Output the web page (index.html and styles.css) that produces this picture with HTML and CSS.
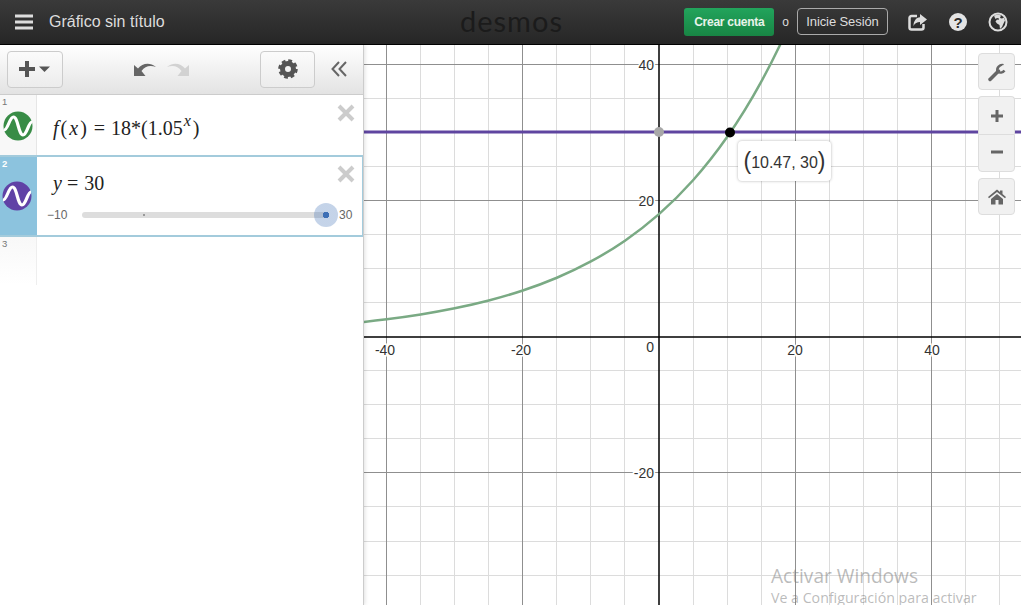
FILE: index.html
```html
<!DOCTYPE html>
<html lang="es">
<head>
<meta charset="utf-8">
<title>Gráfico sin título</title>
<link rel="stylesheet" href="styles.css">
</head>
<body>
<div class="app">
  <header class="topbar">
    <div class="top-left">
      <svg class="hamburger" width="18" height="16" viewBox="0 0 18 16"><path d="M0 2h18M0 8h18M0 14h18"/></svg>
      <span class="title">Gráfico sin título</span>
    </div>
    <div class="logo">desmos</div>
    <div class="top-right">
      <span class="btn-create">Crear cuenta</span>
      <span class="or">o</span>
      <span class="btn-login">Inicie Sesión</span>
      <svg class="top-icon" width="20" height="18" viewBox="0 0 20 18">
        <path class="share-box" d="M9 3H3.500A2 2 0 0 0 1.500 5v9.500A2 2 0 0 0 3.500 16.500h10a2 2 0 0 0 2-2V11"/>
        <path class="share-arrow" d="M12 1l7 5.500-7 5.500V9C9 9 7 10 5.500 13 5.500 8 8 4.500 12 4.200z"/>
      </svg>
      <svg class="top-icon" width="20" height="20" viewBox="0 0 20 20">
        <circle class="help-disc" cx="10" cy="10" r="9"/>
        <text class="help-mark" x="10" y="15.500" text-anchor="middle">?</text>
      </svg>
      <svg class="top-icon" width="20" height="20" viewBox="0 0 20 20">
        <circle class="globe-ring" cx="10" cy="10" r="8.500"/>
        <path class="globe-land" d="M6 3.500l4-1 3 1-1 2.500 2 .5 2-1 1 3-1.500 3-1.500 3.500-2 2-.5-4-2.500-1.500-1.500-2 1.500-2 1.500.5.500-1.500-2-.5-1.500 1-1-2z"/>
      </svg>
    </div>
  </header>

  <div class="workspace">
    <aside class="panel">
      <div class="toolbar">
        <button class="tool-btn add-btn" type="button">
          <svg width="34" height="18" viewBox="0 0 34 18"><path class="plus" d="M9 1v16M1 9h16"/><path class="caret" d="M21 6.500h11l-5.500 5.500z"/></svg>
        </button>
        <div class="history">
          <svg width="24" height="16" viewBox="0 0 24 16"><path class="undo" d="M1 15V4l4 3.500C9 3 16 .5 23 6c-6-2-11-1-14.500 4l4 5z"/></svg>
          <svg width="24" height="16" viewBox="0 0 24 16"><path class="redo" d="M23 15V4l-4 3.500C15 3 8 .5 1 6c6-2 11-1 14.500 4l-4 5z"/></svg>
        </div>
        <button class="tool-btn gear-btn" type="button">
          <svg width="20" height="20" viewBox="0 0 20 20"><circle class="gear-ring" cx="10" cy="10" r="5.500"/><circle class="gear-teeth" cx="10" cy="10" r="8"/></svg>
        </button>
        <svg class="collapse" width="16" height="16" viewBox="0 0 16 16"><path d="M8 1 1.500 8 8 15M15 1 8.500 8 15 15"/></svg>
      </div>

      <div class="expr expr-first">
        <div class="expr-side">
          <span class="expr-num">1</span>
          <svg class="expr-icon" width="30" height="30" viewBox="0 0 30 30"><circle class="disc-green" cx="15" cy="15" r="14.500"/><path class="wave" d="M1 19C5 19 6.500 6 10.500 6 15 6 15.500 24 20 24 24 24 25.500 11 29 11"/></svg>
        </div>
        <div class="expr-body">
          <div class="math"><span class="fn"><i>f</i>(<i>x</i>)</span><span class="eq">=</span>18*(1.05<sup><i>x</i></sup><span class="close">)</span></div>
          <svg class="delete" width="18" height="18" viewBox="0 0 18 18"><path d="M2 2l14 14M16 2 2 16"/></svg>
        </div>
      </div>

      <div class="expr expr-active">
        <div class="expr-side">
          <span class="expr-num">2</span>
          <svg class="expr-icon" width="30" height="30" viewBox="0 0 30 30"><circle class="disc-purple" cx="15" cy="15" r="14.500"/><path class="wave" d="M1 19C5 19 6.500 6 10.500 6 15 6 15.500 24 20 24 24 24 25.500 11 29 11"/></svg>
        </div>
        <div class="expr-body">
          <div class="math"><i>y</i><span class="eq">=</span>30</div>
          <svg class="delete" width="18" height="18" viewBox="0 0 18 18"><path d="M2 2l14 14M16 2 2 16"/></svg>
          <div class="slider">
            <span class="slider-min">−10</span>
            <div class="track"><span class="tick"></span><span class="thumb"></span></div>
            <span class="slider-max">30</span>
          </div>
        </div>
      </div>

      <div class="expr expr-empty">
        <div class="expr-side"><span class="expr-num">3</span></div>
        <div class="expr-body"></div>
      </div>
    </aside>

    <main class="graph">
      <svg class="plot" viewBox="364 45 657 560" width="657" height="560">
        <path class="grid-minor" d="M420.500 45V605M454.500 45V605M488.500 45V605M556.500 45V605M590.500 45V605M624.500 45V605M693.500 45V605M727.500 45V605M761.500 45V605M829.500 45V605M863.500 45V605M897.500 45V605M965.500 45V605M999.500 45V605M364 302.500H1021M364 268.500H1021M364 234.500H1021M364 166.500H1021M364 132.500H1021M364 98.500H1021M364 370.500H1021M364 404.500H1021M364 438.500H1021M364 506.500H1021M364 541.500H1021M364 575.500H1021"/>
        <path class="grid-major" d="M386.500 45V605M522.500 45V605M795.500 45V605M931.500 45V605M364 64.500H1021M364 200.500H1021M364 472.500H1021"/>
        <path class="axis" d="M659 45V605M364 337H1021"/>
        <path class="curve-purple" d="M364 132H1021"/>
        <path class="curve-green" d="M352.550 323.060C363.900 321.950 375.250 320.710 386.600 319.290C397.950 317.870 409.300 316.290 420.650 314.480C432 312.670 443.350 310.640 454.700 308.330C466.050 306.020 477.400 303.440 488.750 300.500C500.100 297.560 511.450 294.260 522.800 290.500C534.150 286.740 545.500 282.530 556.850 277.740C568.200 272.950 579.550 267.570 590.900 261.450C602.250 255.330 613.600 248.470 624.950 240.660C636.300 232.850 647.650 224.090 659 214.120C670.350 204.150 681.700 192.970 693.050 180.250C704.400 167.530 715.750 153.270 727.100 137.030C738.450 120.790 749.800 102.590 761.150 81.870C772.500 61.150 783.850 37.950 795.200 11.500"/>
        <circle class="pt-hole" cx="659" cy="132" r="5"/>
        <circle class="pt-hit" cx="730" cy="132.500" r="5"/>
        <g class="labels">
          <text x="385" y="355" text-anchor="middle">-40</text>
          <text x="521" y="355" text-anchor="middle">-20</text>
          <text x="795" y="355" text-anchor="middle">20</text>
          <text x="932" y="355" text-anchor="middle">40</text>
          <text x="654" y="352" text-anchor="end">0</text>
          <text x="654" y="70" text-anchor="end">40</text>
          <text x="654" y="206" text-anchor="end">20</text>
          <text x="654" y="478" text-anchor="end">-20</text>
        </g>
      </svg>

      <div class="tooltip"><span class="paren">(</span>10.47, 30<span class="paren">)</span></div>

      <div class="graph-controls">
        <div class="ctl">
          <svg width="20" height="20" viewBox="0 0 20 20"><path class="wrench" d="M3 17.500 11.500 9"/><path class="wrench-head" d="M16.500 3.200A5 5 0 0 0 10.500 9.500 5 5 0 0 0 17.500 8.500"/><path class="wrench-jaw" d="M16.800 3.500 13.500 6.500"/></svg>
        </div>
        <div class="ctl-group">
          <div class="ctl"><svg width="16" height="16" viewBox="0 0 16 16"><path class="ctl-mark" d="M8 2v12M2 8h12"/></svg></div>
          <div class="ctl"><svg width="16" height="16" viewBox="0 0 16 16"><path class="ctl-mark" d="M2 8h12"/></svg></div>
        </div>
        <div class="ctl">
          <svg width="18" height="16" viewBox="0 0 18 16"><path class="home" d="M9 .5 12 3V1.500h2.500V5L18 8l-1 1.200L9 3 1 9.200 0 8zM3 10l6-5 6 5v5.500H10.500V11h-3v4.500H3z"/></svg>
        </div>
      </div>
    </main>
  </div>

  <div class="watermark">
    <div class="wm-title">Activar Windows</div>
    <div class="wm-sub">Ve a Configuración para activar</div>
  </div>
</div>
</body>
</html>
```
FILE: styles.css
```css
* { box-sizing: border-box; }
html, body { margin: 0; padding: 0; height: 100%; overflow: hidden; background: #fff; }
body { font-family: "Liberation Sans", Arial, sans-serif; color: #333; }
.app { position: relative; width: 1021px; height: 605px; overflow: hidden; display: flex; flex-direction: column; }

/* top bar */
.topbar { height: 45px; flex: none; display: flex; align-items: center; justify-content: space-between; position: relative; background: linear-gradient(#3a3a3a, #262626); border-bottom: 1px solid #000; padding: 0 14px 1px 15px; }
.top-left { display: flex; align-items: center; gap: 16px; }
.hamburger path { stroke: #ddd; stroke-width: 3; fill: none; }
.title { font-size: 16px; color: #ddd; }
.logo { position: absolute; left: 460px; top: 3px; font-family: "Lato", sans-serif; font-size: 29px; letter-spacing: 1px; color: #1b1b1b; font-weight: 400; }
.top-right { display: flex; align-items: center; }
.btn-create { width: 90px; height: 28px; line-height: 28px; text-align: center; font-size: 12px; letter-spacing: -.25px; font-weight: bold; color: #e8f3ea; background: linear-gradient(#22a45c, #188544); border-radius: 3px; }
.or { font-size: 12px; color: #ddd; margin: 0 8px; }
.btn-login { width: 91px; height: 27px; line-height: 25px; text-align: center; font-size: 13px; letter-spacing: -.1px; color: #ddd; border: 1px solid #aaa; border-radius: 4px; margin-right: 20px; }
.top-icon { margin-right: 20px; display: block; }
.top-icon:last-child { margin-right: -1px; }
.share-box { fill: none; stroke: #ddd; stroke-width: 2.500; }
.share-arrow { fill: #ddd; }
.help-disc { fill: #e4e4e4; }
.help-mark { font-size: 15px; font-weight: bold; fill: #2c2c2c; font-family: "Liberation Sans", sans-serif; }
.globe-ring { fill: none; stroke: #ddd; stroke-width: 2; }
.globe-land { fill: #ddd; }

/* workspace */
.workspace { flex: 1; display: flex; min-height: 0; }
.panel { width: 364px; flex: none; border-right: 1px solid #ccc; background: #fff; display: flex; flex-direction: column; position: relative; z-index: 1; box-shadow: 1px 0 4px rgba(0, 0, 0, .12); }
.toolbar { height: 50px; flex: none; display: flex; align-items: center; padding: 0 16px 1px 7px; background: linear-gradient(#fff, #e3e3e3); border-bottom: 1px solid #ccc; }
.tool-btn { height: 37px; padding: 0; background: linear-gradient(#fbfbfb, #ececec); border: 1px solid #ccc; border-radius: 4px; display: flex; align-items: center; justify-content: center; }
.add-btn { width: 56px; }
.gear-btn { width: 55px; }
.plus { stroke: #555; stroke-width: 4; fill: none; }
.caret { fill: #555; }
.history { display: flex; gap: 9px; margin: 0 0 0 70px; width: 127px; }
.undo { fill: #666; }
.redo { fill: #d2d2d2; }
.gear-ring { fill: none; stroke: #555; stroke-width: 5; }
.gear-teeth { fill: none; stroke: #555; stroke-width: 3.500; stroke-dasharray: 3.600 2.680; }
.collapse { margin-left: 16px; }
.collapse path { fill: none; stroke: #666; stroke-width: 2; }

/* expressions */
.expr { display: flex; flex: none; }
.expr-side { width: 37px; flex: none; position: relative; background: #f8f8f8; border-right: 1px solid #e6e6e6; display: flex; align-items: center; }
.expr-num { position: absolute; left: 2px; top: 1px; font-size: 9.500px; color: #777; }
.expr-icon { display: block; margin-left: 3px; }
.disc-green { fill: #388c46; }
.disc-purple { fill: #6042a6; }
.wave { fill: none; stroke: #fff; stroke-width: 3.200; }
.expr-body { flex: 1; position: relative; padding-left: 16px; }
.expr-first { height: 61px; border-bottom: 1px solid #e6e6e6; }
.expr-first .expr-body { padding-top: 21px; }
.expr-first .expr-icon { margin-top: 1px; }
.expr-active { height: 82px; border: 1px solid #a3cbdc; border-left: 0; border-width: 2px 1px 2px 0; margin-top: -1px; }
.expr-active .expr-side { background: #8cc3de; border-right: 0; }
.expr-active .expr-num { color: #fff; font-weight: bold; top: 1px; }
.expr-active .expr-icon { margin-left: 2px; margin-top: 0; }
.expr-active .expr-body { padding-top: 14px; }
.expr-empty { height: 48px; }
.expr-empty .expr-side { background: linear-gradient(#f8f8f8, #fff); border-right-color: #eee; }
.math { font-family: "Liberation Serif", "Times New Roman", serif; font-size: 20px; line-height: 24px; color: #222; white-space: nowrap; }
.math sup { font-size: 16px; line-height: 0; vertical-align: 9px; margin-left: 1px; }
.fn { letter-spacing: 2px; }
.eq { margin: 0 6px 0 5px; }
.close { margin-left: 2px; }
.delete { position: absolute; right: 8px; top: 9px; }
.expr-active .delete { top: 8px; right: 7px; }
.delete path { fill: none; stroke: #ccc; stroke-width: 4; }

.slider { display: flex; align-items: center; margin: 13px 0 0 -6px; font-size: 12px; color: #666; }
.slider-min { width: 35px; }
.slider-max { margin-left: 11px; }
.track { width: 246px; height: 6px; border-radius: 3px; background: #ddd; position: relative; }
.tick { position: absolute; left: 61px; top: 2px; width: 2px; height: 2px; background: #999; }
.thumb { position: absolute; right: -10px; top: -9px; width: 24px; height: 24px; border-radius: 50%; background: radial-gradient(circle, #3d6fb5 0 3px, rgba(61, 111, 181, .3) 3.500px); }

/* graph */
.graph { flex: 1; position: relative; overflow: hidden; }
.plot { display: block; }
.grid-minor { stroke: #dcdcdc; stroke-width: 1; fill: none; }
.grid-major { stroke: #8f8f8f; stroke-width: 1; fill: none; }
.axis { stroke: #000; stroke-width: 1.500; fill: none; }
.curve-purple { stroke: #5f45a0; stroke-width: 3; fill: none; }
.curve-green { stroke: #7aaa84; stroke-width: 2.500; fill: none; }
.pt-hole { fill: #a8a8a8; }
.pt-hit { fill: #000; }
.labels text { font-size: 14px; fill: #333; stroke: #fff; stroke-width: 3px; paint-order: stroke; font-family: "Liberation Sans", sans-serif; }
.tooltip { position: absolute; left: 374px; top: 96px; width: 93px; height: 40px; line-height: 40px; text-align: center; background: #fff; border-radius: 4px; box-shadow: 0 0 3px rgba(0, 0, 0, .3); font-size: 16px; color: #333; white-space: nowrap; }
.paren { font-size: 23px; vertical-align: -1px; }
.graph-controls { position: absolute; right: 6px; top: 8px; width: 37px; display: flex; flex-direction: column; gap: 6px; }
.ctl { height: 37px; background: #f1f1f1; border: 1px solid #ddd; border-radius: 4px; display: flex; align-items: center; justify-content: center; }
.ctl-group .ctl:first-child { border-radius: 4px 4px 0 0; border-bottom: 0; height: 38px; }
.ctl-group .ctl:last-child { border-radius: 0 0 4px 4px; height: 38px; padding-bottom: 2px; }
.ctl-mark { fill: none; stroke: #666; stroke-width: 3; }
.wrench { fill: none; stroke: #666; stroke-width: 3.500; stroke-linecap: round; }
.wrench-head { fill: none; stroke: #666; stroke-width: 2.500; }
.wrench-jaw { fill: none; stroke: #f1f1f1; stroke-width: 2; }
.home { fill: #666; }

/* watermark */
.watermark { position: absolute; left: 771px; top: 563px; pointer-events: none; font-family: "Open Sans", "Noto Sans", sans-serif; color: rgba(120, 120, 120, .5); white-space: nowrap; }
.wm-title { font-size: 19.100px; line-height: 26px; }
.wm-sub { font-size: 14.200px; line-height: 18px; }
```
